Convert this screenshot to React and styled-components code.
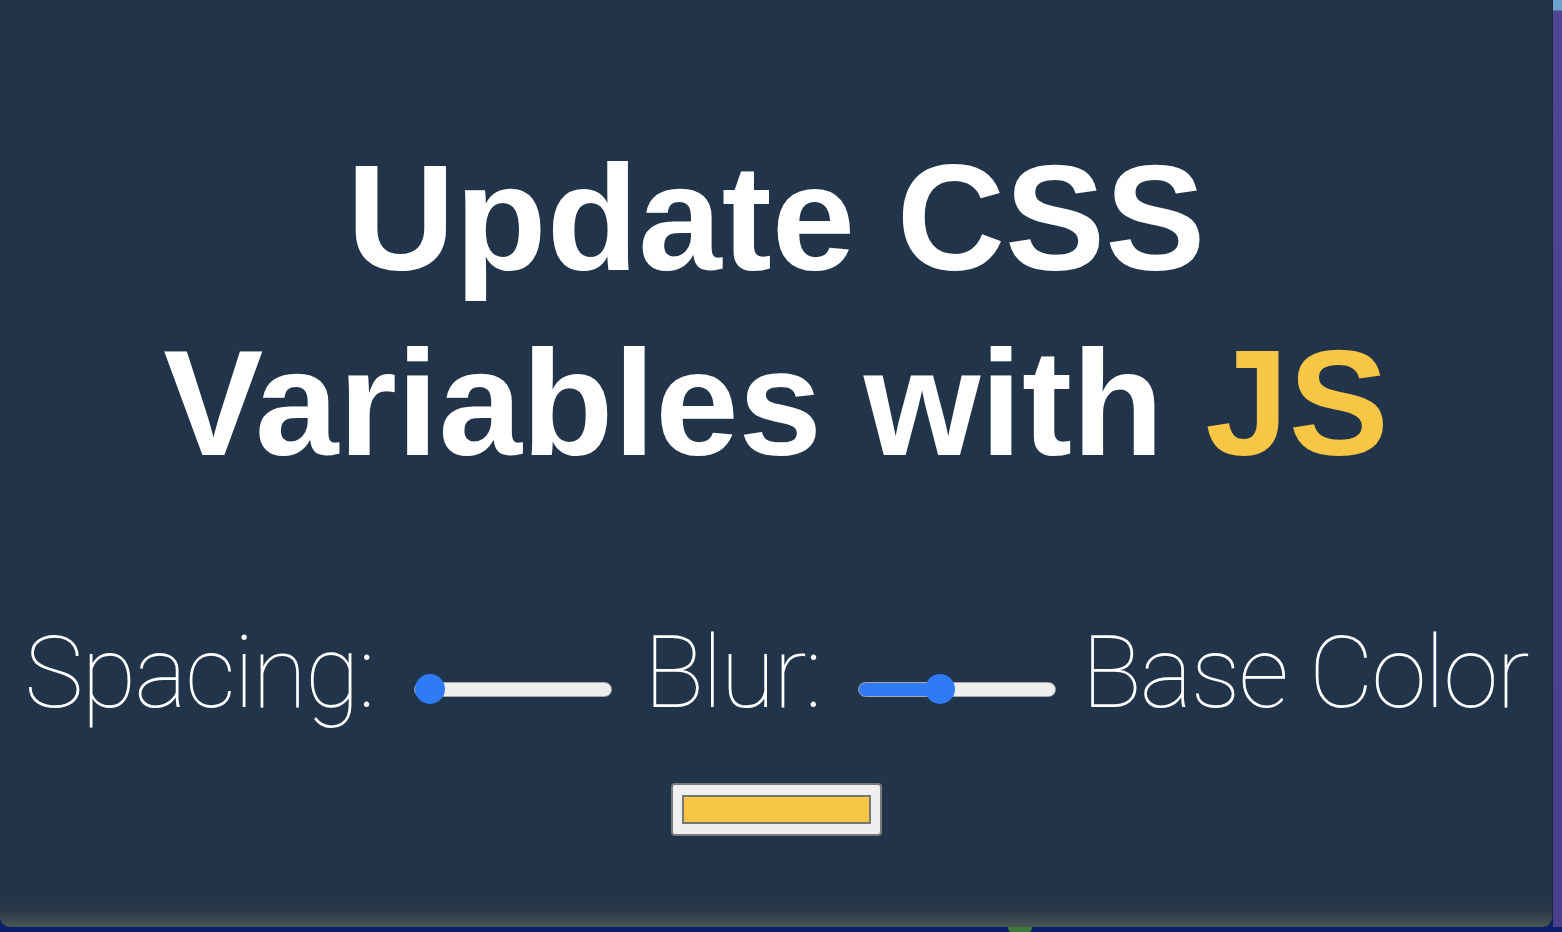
import React, { useState } from 'react'
import styled, { createGlobalStyle } from 'styled-components'

const GlobalStyle = createGlobalStyle`
  html, body {
    margin: 0;
    padding: 0;
    width: 100%;
    height: 100%;
    overflow: hidden;
    background: #0b1f6c;
  }
  * {
    box-sizing: border-box;
  }
`

const Desktop = styled.div`
  display: grid;
  grid-template-columns: 1553px 1fr;
  grid-template-rows: 927px 1fr;
  width: 1562px;
  height: 932px;
`

const Window = styled.main`
  display: flex;
  flex-direction: column;
  align-items: center;
  padding-top: 126px;
  background: linear-gradient(to bottom, #213449 0, #213449 895px, #2c3a48 912px, #4b5552 927px);
  border-bottom-left-radius: 10px;
  border-bottom-right-radius: 10px;
  border-right: 1px solid #1a2838;
  font-family: "Liberation Sans", Arial, sans-serif;
  color: #ffffff;
`

const SideStrip = styled.div`
  background: linear-gradient(to bottom, #6aa3cf 0, #6aa3cf 10px, #4f4592 11px, #4a3f8c 100%);
`

const BottomStrip = styled.div`
  grid-column: 1 / span 2;
  display: flex;
  padding-left: 1008px;
  background: #0b1f6c;
`

const GreenBit = styled.span`
  width: 24px;
  height: 5px;
  background: #3b7a3c;
  border-radius: 0 0 4px 4px;
`

const Title = styled.h1`
  margin: 0;
  font-size: 150px;
  line-height: 185px;
  font-weight: 700;
  text-align: center;
`

const Highlight = styled.span`
  color: #f6c644;
`

const Controls = styled.div`
  display: flex;
  align-items: center;
  justify-content: center;
  margin-top: 122px;
  width: 100%;
  white-space: nowrap;
`

const Label = styled.label`
  font-family: "Roboto", "Lato", sans-serif;
  font-weight: 100;
  font-size: 100px;
  line-height: 110px;
  letter-spacing: -2px;
  margin-right: ${(p) => p.$gap}px;
`

const Range = styled.input.attrs({ type: 'range' })`
  -webkit-appearance: none;
  appearance: none;
  width: 198px;
  height: 30px;
  margin: 32px ${(p) => p.$gap}px 0 0;
  padding: 0;
  background: transparent;
  cursor: pointer;

  &::-webkit-slider-runnable-track {
    height: 15px;
    border-radius: 8px;
    border: 1.5px solid #a9a9a9;
    background: linear-gradient(
      to right,
      #2f7af5 0,
      #2f7af5 ${(p) => p.$fill}%,
      #eeeeee ${(p) => p.$fill}%,
      #eeeeee 100%
    );
  }
  &::-webkit-slider-thumb {
    -webkit-appearance: none;
    appearance: none;
    width: 30px;
    height: 30px;
    margin-top: -9px;
    border-radius: 50%;
    background: #2f7af5;
    border: none;
  }
`

const ColorRow = styled.div`
  display: flex;
  justify-content: center;
  margin-top: 55px;
`

const ColorSwatch = styled.div`
  width: 211px;
  height: 53px;
  padding: 10px 9px;
  border: 2px solid #7a7a7a;
  border-radius: 4px;
  background: #efefef;
`

const SwatchFill = styled.div`
  width: 100%;
  height: 100%;
  border: 2px solid #777777;
  background: ${(p) => p.$color};
`

export default function App() {
  const [spacing, setSpacing] = useState(10)
  const [blur, setBlur] = useState(10)
  const base = '#f6c644'

  const pct = (v, min, max) => ((v - min) / (max - min)) * 100

  return (
    <>
      <GlobalStyle />
      <Desktop>
        <Window>
          <Title>
            Update CSS
            <br />
            Variables with <Highlight>JS</Highlight>
          </Title>
          <Controls>
            <Label htmlFor="spacing" $gap={40}>Spacing:</Label>
            <Range
              id="spacing"
              min={10}
              max={200}
              value={spacing}
              onChange={(e) => setSpacing(+e.target.value)}
              $fill={pct(spacing, 10, 200)}
              $gap={32}
            />
            <Label htmlFor="blur" $gap={37}>Blur:</Label>
            <Range
              id="blur"
              min={0}
              max={25}
              value={blur}
              onChange={(e) => setBlur(+e.target.value)}
              $fill={pct(blur, 0, 25)}
              $gap={26}
            />
            <Label htmlFor="base" $gap={0}>Base Color</Label>
          </Controls>
          <ColorRow>
            <ColorSwatch id="base">
              <SwatchFill $color={base} />
            </ColorSwatch>
          </ColorRow>
        </Window>
        <SideStrip />
        <BottomStrip>
          <GreenBit />
        </BottomStrip>
      </Desktop>
    </>
  )
}
